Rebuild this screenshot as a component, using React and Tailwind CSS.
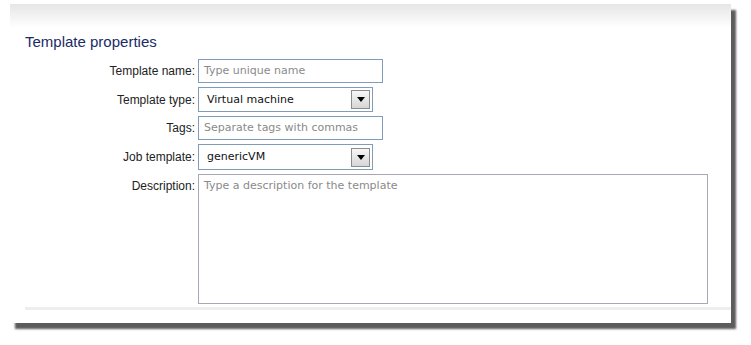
import React from 'react';

const labelCls = "w-[173px] shrink-0 pr-[3px] text-right text-[12px] text-[#222] leading-[24px] [font-family:'Liberation_Sans',Arial,sans-serif]";
const fieldFont = "[font-family:'DejaVu_Sans',Verdana,sans-serif] text-[11px] leading-[16px]";

const SelectBox = ({ value, h }) => (
  <div className={`flex items-center justify-between w-[175px] ${h} border border-[#7f9db9] bg-white pl-[8px] pr-[2px] ${fieldFont}`}>
    <span className="text-[#111]">{value}</span>
    <div className="flex items-center justify-center w-[19px] h-[19px] border border-[#8c8c8c] bg-gradient-to-b from-[#f7f7f7] to-[#d6d6d6]">
      <svg width="8" height="5" viewBox="0 0 8 5">
        <path d="M0 0 H8 L4 5 Z" fill="#000" />
      </svg>
    </div>
  </div>
);

const TextBox = ({ placeholder }) => (
  <div className={`flex items-center w-[185px] h-[24px] border border-[#7f9db9] bg-white pl-[5px] ${fieldFont}`}>
    <span className="text-[#8a8a8a]">{placeholder}</span>
  </div>
);

const Row = ({ label, children, top }) => (
  <div className={`flex ${top ? 'items-start' : 'items-center'}`}>
    <div className={labelCls}>{label}</div>
    {children}
  </div>
);

export default function App() {
  return (
    <div className="w-[751px] h-[345px] bg-white overflow-hidden">
      <div className="ml-[10px] mt-[4px] w-[721px] h-[319px] bg-white shadow-[5px_6px_2px_#5c5c5c] flex flex-col">
        {/* faded top edge */}
        <div className="h-[24px] bg-gradient-to-b from-[#e6e6e6] to-white" />
        <div className="pl-[15px] flex flex-col">
          <h2 className="mt-[4px] text-[15px] leading-[20px] text-[#1a2b66] [font-family:'Liberation_Sans',Arial,sans-serif]">
            Template properties
          </h2>
          <div className="mt-[7px] flex flex-col gap-[4px]">
            <Row label="Template name:">
              <TextBox placeholder="Type unique name" />
            </Row>
            <Row label="Template type:">
              <SelectBox value="Virtual machine" h="h-[25px]" />
            </Row>
            <Row label="Tags:">
              <TextBox placeholder="Separate tags with commas" />
            </Row>
            <Row label="Job template:">
              <SelectBox value="genericVM" h="h-[26px]" />
            </Row>
            <Row label="Description:" top>
              <div className={`w-[510px] h-[130px] border border-[#a8a8b4] bg-white pl-[5px] pt-[3px] ${fieldFont}`}>
                <span className="text-[#8a8a8a]">Type a description for the template</span>
              </div>
            </Row>
          </div>
          <div className="mt-[3px] h-[3px] bg-[#eeeeee]" />
        </div>
      </div>
    </div>
  );
}
